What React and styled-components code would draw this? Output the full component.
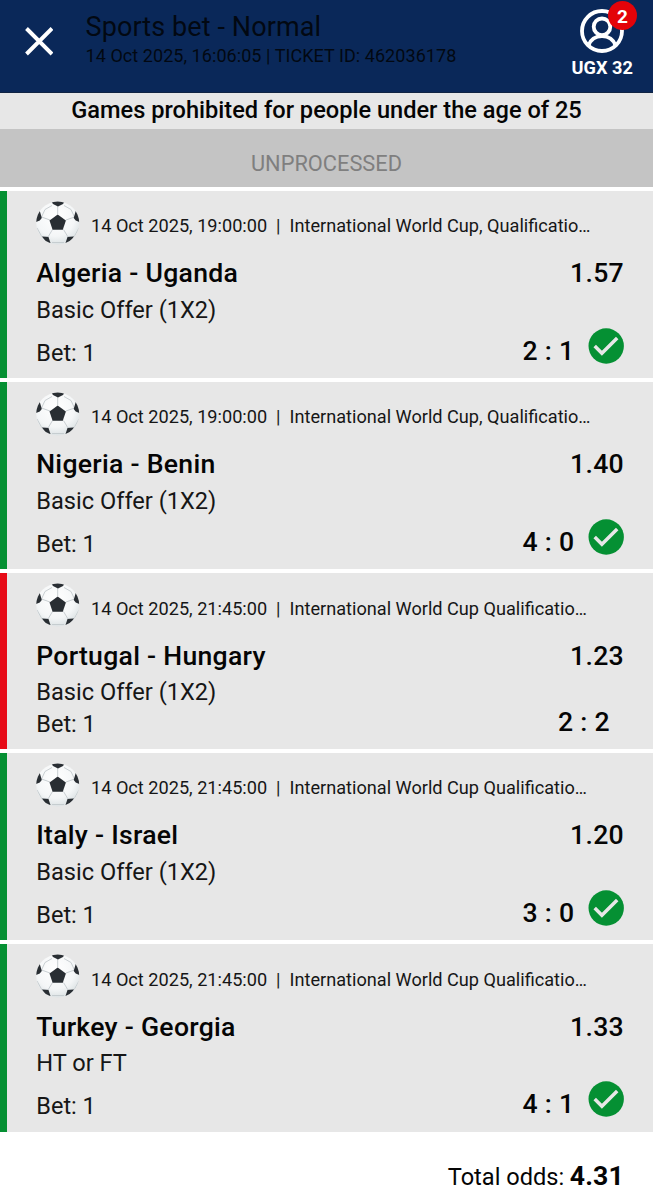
import React from 'react';
import styled, { createGlobalStyle } from 'styled-components';

const GlobalStyle = createGlobalStyle`
  *, *::before, *::after { box-sizing: border-box; }
  body { margin: 0; background: #fff; font-family: Roboto, "Liberation Sans", sans-serif; color: #050505; }
`;

const Page = styled.main`
  width: 653px;
  height: 1200px;
  overflow: hidden;
  background: #fff;
  white-space: nowrap;
`;

const Header = styled.header`
  display: flex;
  align-items: flex-start;
  height: 93px;
  background: #0a2859;
  border-bottom: 1px solid #102443;
`;

const CloseButton = styled.button`
  width: 85.5px;
  height: 83px;
  padding: 0 0 0 25px;
  border: 0;
  background: none;
  text-align: left;
  svg { display: block; }
`;

const TicketInfo = styled.div`
  flex: 1;
  padding-top: 11px;
`;

const TicketTitle = styled.h1`
  margin: 0;
  font-size: 27px;
  font-weight: 400;
  letter-spacing: 0.1px;
  line-height: 33px;
  color: #020812;
`;

const TicketMeta = styled.p`
  margin: 0;
  font-size: 18px;
  letter-spacing: 0.06px;
  line-height: 24px;
  color: #020812;
`;

const Account = styled.div`
  position: relative;
  display: flex;
  flex-direction: column;
  align-items: center;
  width: 101.5px;
  padding-top: 9px;
  svg { display: block; }
`;

const Badge = styled.span`
  position: absolute;
  top: 1px;
  left: 56px;
  width: 29px;
  height: 29px;
  padding-left: 1px;
  border-radius: 50%;
  background: #e30309;
  color: #fff;
  font-size: 19px;
  font-weight: 700;
  line-height: 32px;
  text-align: center;
`;

const Balance = styled.span`
  margin-top: 3px;
  font-size: 18.2px;
  font-weight: 700;
  line-height: 24px;
  color: #fff;
`;

const AgeNotice = styled.p`
  margin: 0;
  height: 36px;
  background: #e7e7e7;
  font-size: 23.6px;
  font-weight: 500;
  line-height: 35px;
  text-align: center;
`;

const Status = styled.div`
  height: 58px;
  padding-top: 18px;
  background: #c4c4c4;
  color: #7f7f7f;
  font-size: 21.8px;
  line-height: 34px;
  text-align: center;
`;

const BetList = styled.section`
  display: flex;
  flex-direction: column;
  gap: 3.67px;
  padding-top: 3.5px;
`;

const Card = styled.article`
  height: ${({ $won }) => ($won ? 187.67 : 176)}px;
  padding: 9px 29px 0 29px;
  border-left: 7px solid ${({ $won }) => ($won ? '#059033' : '#e70b17')};
  background: #e7e7e7;
`;

const MetaRow = styled.div`
  display: flex;
  align-items: flex-start;
  height: 55.5px;
  svg { flex: none; margin-top: 1px; }
`;

const MetaText = styled.span`
  margin: 14.45px 0 0 11px;
  font-size: 18.15px;
  line-height: 24px;
  white-space: pre;
  color: #161616;
`;

const Row = styled.div`
  display: flex;
  justify-content: space-between;
`;

const Teams = styled.h2`
  margin: 0 0 0 0.2px;
  font-size: 26.6px;
  font-weight: 500;
  letter-spacing: 0.28px;
  line-height: 36px;
`;

const Odds = styled.span`
  font-size: 26.6px;
  font-weight: 500;
  letter-spacing: 0.3px;
  line-height: 36px;
`;

const Market = styled.p`
  margin: 0;
  padding: 0.65px 0 0 0.3px;
  font-size: 23.6px;
  line-height: 36px;
  color: #161616;
`;

const ResultRow = styled(Row)`
  height: ${({ $won }) => ($won ? 50 : 36)}px;
`;

const Pick = styled.span`
  padding: ${({ $won }) => ($won ? 7 : 0)}px 0 0 0.3px;
  font-size: 23.5px;
  line-height: ${({ $won }) => ($won ? 36 : 28)}px;
  color: #161616;
`;

const Score = styled.span`
  display: flex;
  padding-right: ${({ $won }) => ($won ? 0 : 14)}px;
  font-size: 26.6px;
  font-weight: 500;
  letter-spacing: 0.3px;
  line-height: ${({ $won }) => ($won ? 46 : 23)}px;
  svg { margin: 0 0 0 13.6px; }
`;

const Total = styled.footer`
  display: flex;
  justify-content: flex-end;
  align-items: baseline;
  gap: 5.5px;
  padding: 26px 29px 0 0;
  font-size: 23.6px;
  line-height: 36px;
  strong { font-size: 26.6px; font-weight: 700; letter-spacing: 0.2px; }
`;

function CloseIcon() {
  return (
    <svg width="28" height="83" viewBox="0 0 28 83">
      <path d="M1.5 28.500l25.500 25.500M27 28.500L1.500 54" stroke="#fff" strokeWidth="3.900" fill="none" />
    </svg>
  );
}

function AccountIcon() {
  return (
    <svg width="44" height="44" viewBox="0 0 44 44" fill="none" stroke="#fff" strokeWidth="3.8">
      <circle cx="22" cy="22" r="20" />
      <circle cx="22" cy="17.800" r="8.300" />
      <path d="M8.500 36.500c2.200-6.100 7.200-9.300 13.500-9.300s11.300 3.200 13.500 9.300" />
    </svg>
  );
}

function BallIcon() {
  return (
    <svg width="44" height="44" viewBox="0 0 44 44">
      <defs>
        <radialGradient id="ballShade" cx="0.45" cy="0.35" r="0.65">
          <stop offset="0" stopColor="#fff" />
          <stop offset="0.7" stopColor="#f4f6f7" />
          <stop offset="1" stopColor="#dde3e5" />
        </radialGradient>
        <clipPath id="ballEdge"><circle cx="21.700" cy="22" r="21.500" /></clipPath>
      </defs>
      <circle cx="21.700" cy="22" r="21.500" fill="url(#ballShade)" />
      <g clipPath="url(#ballEdge)">
        <path d="M21.700 4.500V13M14 19L5.500 16M30 19l8.500-3M16.500 28.500L12 36M27.500 28.500L32 36M5.500 16L9 8.500l7-4M38.500 16L35 8.500l-7-4M12 36H6L1 27M32 36h6l5-9M16 41.500h12" fill="none" stroke="#c3c9cd" strokeWidth="0.9" />
        <g fill="#292e33">
          <path d="M21.700 13.500l8.200 6-3.100 9.300H16.600l-3.100-9.300z" />
          <path d="M15 0h14l-2 3-5 2.500L17 3z" />
          <path d="M3.800 10l2 7-2 2.500-5 2V14zM39.700 10l-2 7 2 2.500 5 2V14z" />
          <path d="M6 35.500l6.500.5 2 6-3 1zM38 35.500l-6.500.5-2 6 3 1z" />
        </g>
      </g>
    </svg>
  );
}

function CheckIcon() {
  return (
    <svg width="36" height="36" viewBox="0 0 36 36">
      <circle cx="18.200" cy="18" r="17.700" fill="#059033" />
      <path d="M6.700 18l7.200 7.300L29.200 10" fill="none" stroke="#e7e7e7" strokeWidth="3.500" />
    </svg>
  );
}

const bets = [
  { time: '19:00:00', league: 'International World Cup, Qualificatio…', teams: 'Algeria - Uganda', odds: '1.57', market: 'Basic Offer (1X2)', score: '2 : 1', won: true },
  { time: '19:00:00', league: 'International World Cup, Qualificatio…', teams: 'Nigeria - Benin', odds: '1.40', market: 'Basic Offer (1X2)', score: '4 : 0', won: true },
  { time: '21:45:00', league: 'International World Cup Qualificatio…', teams: 'Portugal - Hungary', odds: '1.23', market: 'Basic Offer (1X2)', score: '2 : 2', won: false },
  { time: '21:45:00', league: 'International World Cup Qualificatio…', teams: 'Italy - Israel', odds: '1.20', market: 'Basic Offer (1X2)', score: '3 : 0', won: true },
  { time: '21:45:00', league: 'International World Cup Qualificatio…', teams: 'Turkey - Georgia', odds: '1.33', market: 'HT or FT', score: '4 : 1', won: true },
];

function BetCard({ bet }) {
  return (
    <Card $won={bet.won}>
      <MetaRow>
        <BallIcon />
        <MetaText>{`14 Oct 2025, ${bet.time}  |  ${bet.league}`}</MetaText>
      </MetaRow>
      <Row>
        <Teams>{bet.teams}</Teams>
        <Odds>{bet.odds}</Odds>
      </Row>
      <Market>{bet.market}</Market>
      <ResultRow $won={bet.won}>
        <Pick $won={bet.won}>Bet: 1</Pick>
        <Score $won={bet.won}>
          {bet.score}
          {bet.won && <CheckIcon />}
        </Score>
      </ResultRow>
    </Card>
  );
}

export default function App() {
  return (
    <Page>
      <GlobalStyle />
      <Header>
        <CloseButton aria-label="Close"><CloseIcon /></CloseButton>
        <TicketInfo>
          <TicketTitle>Sports bet - Normal</TicketTitle>
          <TicketMeta>14 Oct 2025, 16:06:05 | TICKET ID: 462036178</TicketMeta>
        </TicketInfo>
        <Account>
          <AccountIcon />
          <Badge>2</Badge>
          <Balance>UGX 32</Balance>
        </Account>
      </Header>
      <AgeNotice>Games prohibited for people under the age of 25</AgeNotice>
      <Status>UNPROCESSED</Status>
      <BetList>
        {bets.map((bet) => <BetCard key={bet.teams} bet={bet} />)}
      </BetList>
      <Total>
        <span>Total odds:</span>
        <strong>4.31</strong>
      </Total>
    </Page>
  );
}
